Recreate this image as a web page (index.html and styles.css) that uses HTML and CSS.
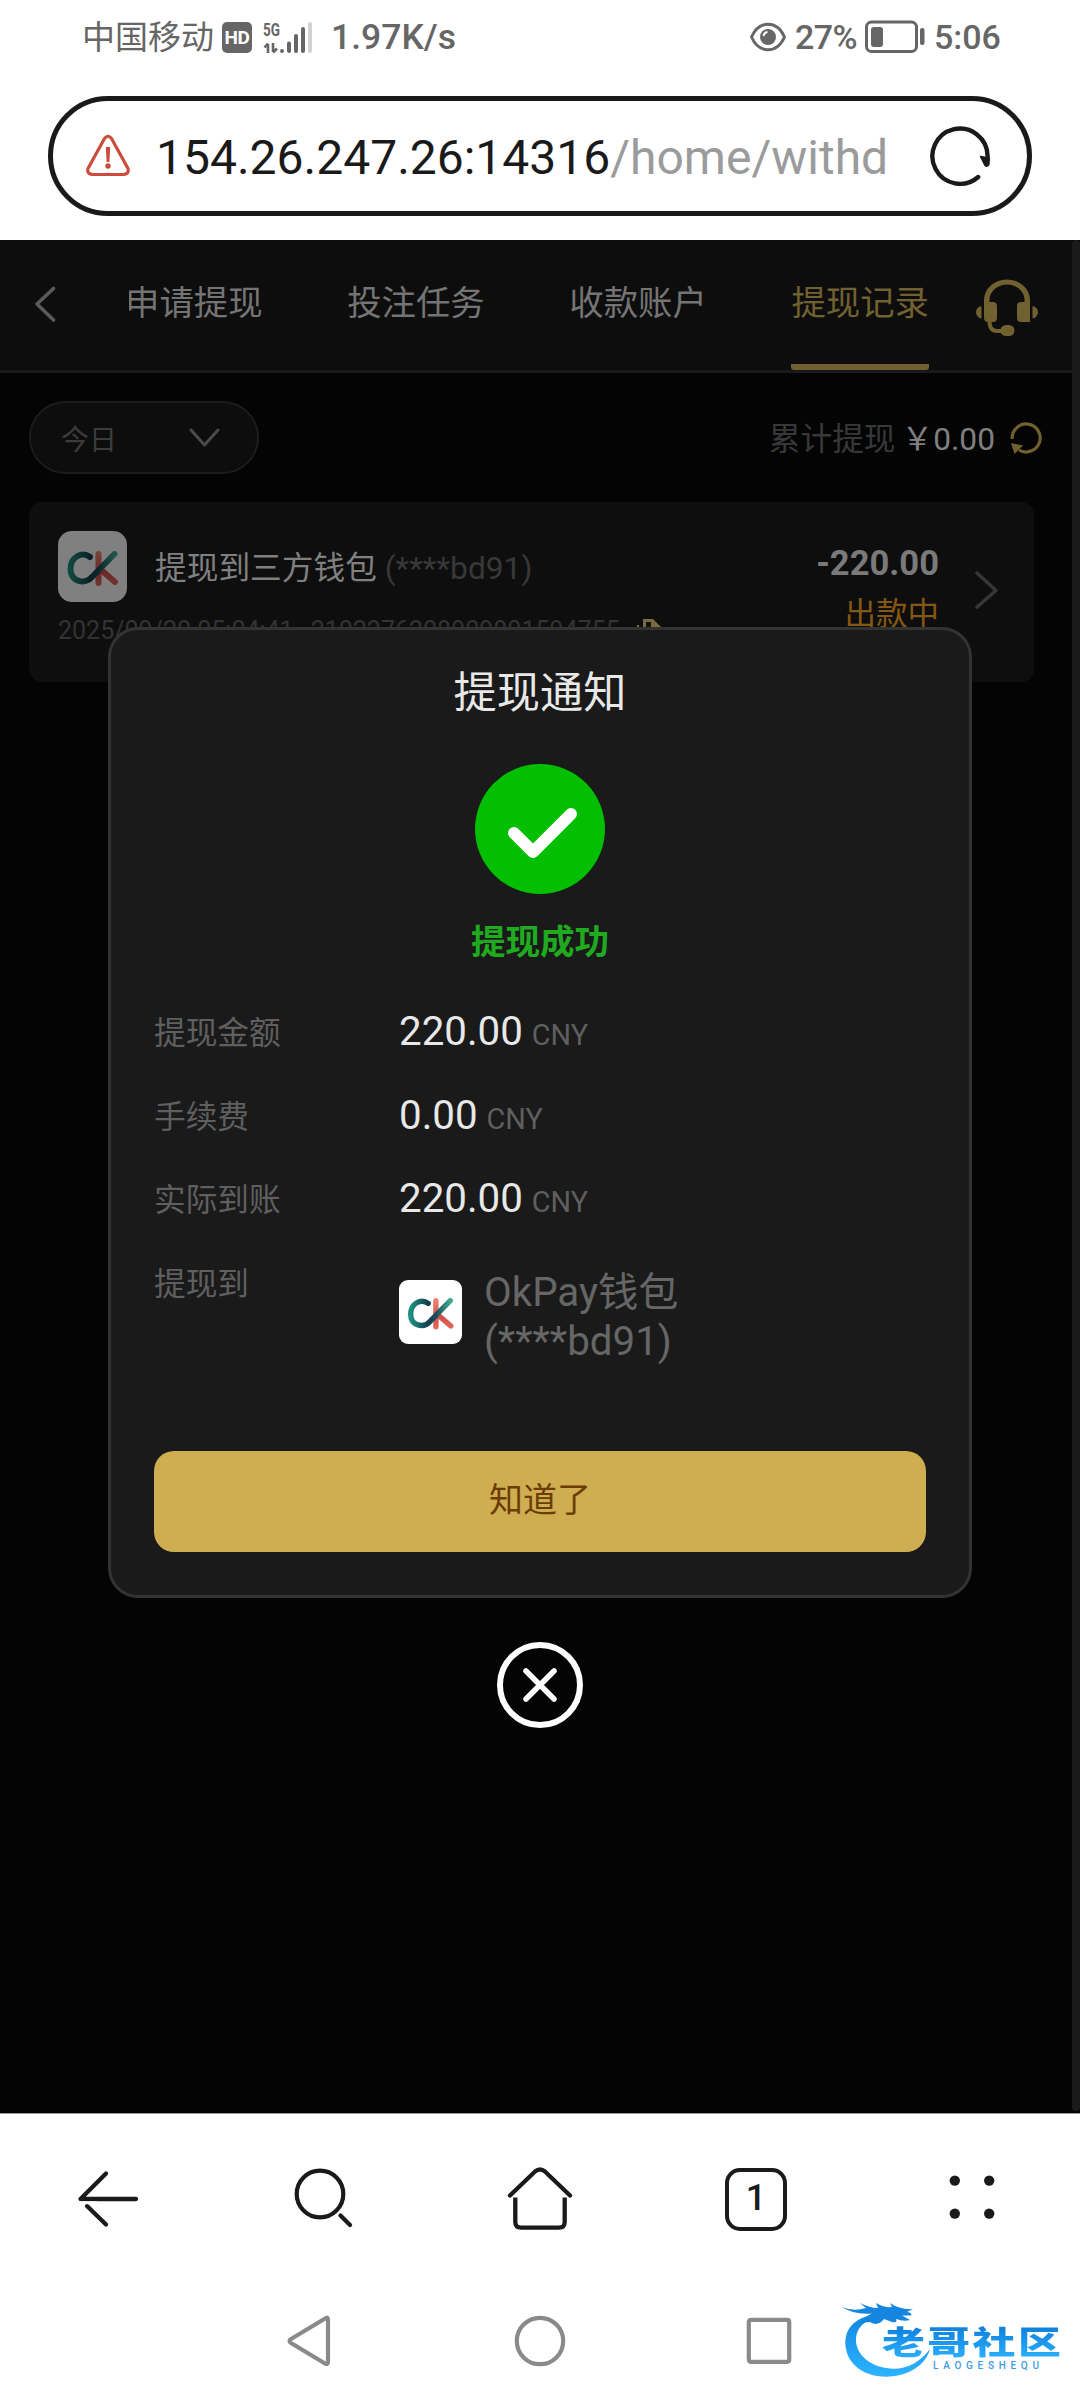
FILE: index.html
```html
<!DOCTYPE html>
<html lang="zh-CN">
<head>
<meta charset="utf-8">
<title>提现记录</title>
<link rel="stylesheet" href="styles.css">
</head>
<body>
<svg width="0" height="0" class="defs">
  <defs>
    <linearGradient id="ckTeal" gradientUnits="userSpaceOnUse" x1="12" y1="28" x2="57" y2="28"><stop offset="0" stop-color="#1d9280"/><stop offset=".45" stop-color="#153f50"/><stop offset=".65" stop-color="#17505d"/><stop offset="1" stop-color="#45ad92"/></linearGradient>
    <linearGradient id="ckRed" gradientUnits="userSpaceOnUse" x1="0" y1="22" x2="0" y2="54"><stop offset="0" stop-color="#ee8371"/><stop offset=".6" stop-color="#d3504c"/><stop offset="1" stop-color="#e46a5c"/></linearGradient>
    <linearGradient id="sea" gradientUnits="userSpaceOnUse" x1="0" y1="8" x2="0" y2="80"><stop offset="0" stop-color="#0f7fdc"/><stop offset="1" stop-color="#2bb2ff"/></linearGradient>
    <symbol id="ck" viewBox="0 0 69 71">
      <g fill="none" stroke-linecap="round" stroke-linejoin="round" stroke-width="6">
        <path d="M40.500 23V52M42 38l15 13" stroke="url(#ckRed)"/>
        <path d="M32 26C24 20 12.500 26 12.500 38C12.500 51 27 54 34 46L56.500 23" stroke="url(#ckTeal)"/>
      </g>
    </symbol>
  </defs>
</svg>

<div class="screen">
  <header class="status">
    <div class="status-left">
      <span class="carrier">中国移动</span>
      <span class="hd">HD</span>
      <svg class="signal" width="52" height="34" viewBox="0 0 52 34">
        <text x="0" y="15.500" class="g5" textLength="17" lengthAdjust="spacingAndGlyphs">5G</text>
        <path d="M5 33V24M1.500 27.500L5 23.500M10 23v9M10 32.500l4-4" fill="none" stroke="#666" stroke-width="2.600"/>
        <g stroke="#666" stroke-width="4" stroke-linecap="round"><path d="M19 31v0M26 23.500v7.500M33 16v15M40 9v22"/><path d="M47 4v27" stroke="#d2d2d2"/></g>
      </svg>
      <span class="speed">1.97K/s</span>
    </div>
    <div class="status-right">
      <svg width="38" height="30" viewBox="0 0 38 30"><path d="M2.500 15C10-2 28-2 35.500 15C28 32 10 32 2.500 15Z" fill="none" stroke="#666" stroke-width="3"/><circle cx="19" cy="15" r="8" fill="#666"/><path d="M14.500 14q.5-3.500 4-4" stroke="#fff" stroke-width="1.800" fill="none"/></svg>
      <span class="pct">27%</span>
      <svg class="batt" width="62" height="34" viewBox="0 0 62 34"><rect x="1.500" y="2" width="50" height="29.500" rx="5" fill="none" stroke="#666" stroke-width="3"/><rect x="6" y="7" width="12" height="20" rx="3" fill="#666"/><rect x="55" y="8" width="4.500" height="17" rx="2" fill="#666"/></svg>
      <span class="clock">5:06</span>
    </div>
  </header>

  <div class="addr">
    <svg class="warn" width="46" height="44" viewBox="0 0 46 44"><path d="M19.500 4.500Q23 0 26.500 4.500L43 34.500Q44.500 39.500 39 40.500H7Q1.500 39.500 3 34.500Z" fill="none" stroke="#cc4b3c" stroke-width="3.200" stroke-linejoin="round"/><path d="M20.800 13h4.400l-.8 15h-2.800z" fill="#cc4b3c"/><circle cx="23" cy="32" r="2.700" fill="#cc4b3c"/></svg>
    <div class="url">154.26.247.26:14316<span>/home/withd</span></div>
    <svg class="reload" width="64" height="64" viewBox="0 0 64 64"><path d="M50.200 53A27.600 27.600 0 1 1 59.600 32V36" fill="none" stroke="#1a1a1a" stroke-width="4.400" stroke-linecap="round"/><path d="M52.500 32.500L61 34V40Q59.500 43.500 57 41.500Z" fill="#1a1a1a" stroke="#1a1a1a" stroke-width="1.500" stroke-linejoin="round"/></svg>
  </div>

  <main class="page">
    <div class="content">
      <nav class="tabs">
        <svg class="back" width="24" height="37" viewBox="0 0 24 37"><path d="M19.500 2.500L3 18L19.500 34" fill="none" stroke="#5a5a5a" stroke-width="3.600" stroke-linecap="round" stroke-linejoin="round"/></svg>
        <div class="tablist">
          <span class="tab first">申请提现</span>
          <span class="tab">投注任务</span>
          <span class="tab">收款账户</span>
          <span class="tab active">提现记录</span>
        </div>
        <svg class="headset" width="64" height="58" viewBox="0 0 64 58"><g fill="#716030"><path d="M9 24V22a23 20.500 0 0 1 46 0V44H46a4 4 0 0 1-4-4V28a4 4 0 0 1 4-4H49.500V22a17.500 15.500 0 0 0-35 0V24H18a4 4 0 0 1 4 4V40a4 4 0 0 1-4 4H13a4 4 0 0 1-4-4Z"/><path d="M6.500 28V40.500A6.300 6.300 0 0 1 6.500 28ZM57.500 28V40.500A6.300 6.300 0 0 0 57.500 28Z"/><rect x="25.500" y="47" width="14" height="11" rx="5.500"/></g><path d="M14.500 43Q14.500 53 22 53H28" fill="none" stroke="#716030" stroke-width="4"/></svg>
      </nav>

      <div class="filter">
        <div class="select"><span>今日</span><svg width="32" height="22" viewBox="0 0 32 22"><path d="M3 3L16.500 18L30 3" fill="none" stroke="#4a4a4a" stroke-width="3" stroke-linecap="round" stroke-linejoin="round"/></svg></div>
        <div class="sum"><span class="sum-label">累计提现</span><span class="sum-val">￥0.00</span><svg width="34" height="34" viewBox="0 0 34 34"><path d="M3.200 18A14 14 0 1 1 10 29" fill="none" stroke="#716030" stroke-width="3.200"/><path d="M2 22l12 2.500-8.500 8.500z" fill="#716030"/></svg></div>
      </div>

      <section class="record">
        <div class="rec-main">
          <div class="rec-top"><span class="logo dim"><svg width="69" height="71"><use href="#ck"/></svg></span><span class="rec-title">提现到三方钱包 <em>(****bd91)</em></span></div>
          <div class="rec-meta"><span>2025/09/20 05:04:41</span><span>2102276208909801594755</span><svg width="24" height="26" viewBox="0 0 24 26"><path d="M1 6V24h14" fill="none" stroke="#7a6b3c" stroke-width="2"/><path d="M6 0h10l8 8v14H6z" fill="#7a6b3c"/><path d="M9 3h5v9H9z" fill="#101010"/></svg></div>
        </div>
        <div class="rec-side"><b>-220.00</b><span>出款中</span></div>
        <svg class="go" width="26" height="40" viewBox="0 0 26 40"><path d="M3 3L22 20.500L3 37" fill="none" stroke="#363636" stroke-width="3.600" stroke-linecap="round" stroke-linejoin="round"/></svg>
      </section>
    </div>
    <div class="scrollbar"></div>

    <div class="layer">
      <div class="dialog">
        <h1>提现通知</h1>
        <svg class="ok" width="130" height="130" viewBox="0 0 130 130"><circle cx="65" cy="65" r="65" fill="#04be02"/><path d="M39 69L58 88L96 50" fill="none" stroke="#fff" stroke-width="12" stroke-linecap="round" stroke-linejoin="round"/></svg>
        <p class="done">提现成功</p>
        <dl>
          <dt>提现金额</dt><dd>220.00 <small>CNY</small></dd>
          <dt>手续费</dt><dd>0.00 <small>CNY</small></dd>
          <dt>实际到账</dt><dd>220.00 <small>CNY</small></dd>
          <dt>提现到</dt>
          <dd class="to"><span class="logo small"><svg width="63" height="64"><use href="#ck"/></svg></span><span class="wallet">OkPay钱包<br>(****bd91)</span></dd>
        </dl>
        <button class="confirm">知道了</button>
      </div>
      <svg class="close" width="86" height="86" viewBox="0 0 86 86"><circle cx="43" cy="43" r="40" fill="none" stroke="#fff" stroke-width="6"/><path d="M29 29L57 57M57 29L29 57" stroke="#fff" stroke-width="5.500" stroke-linecap="round"/></svg>
    </div>
  </main>

  <nav class="toolbar">
    <svg viewBox="0 0 80 80"><path d="M38 19.500L12.500 45H68M38 70.500L19 52" fill="none" stroke="#1a1a1a" stroke-width="4.300" stroke-linecap="round" stroke-linejoin="round"/><path d="M9 47.400h20v2.800H9z" fill="#fff"/></svg>
    <svg viewBox="0 0 80 80"><circle cx="36" cy="40" r="23.300" fill="none" stroke="#1a1a1a" stroke-width="4.200"/><path d="M56.500 61.500l9.500 9.500" stroke="#1a1a1a" stroke-width="4.300" stroke-linecap="round"/></svg>
    <svg viewBox="0 0 80 80"><path d="M10 41.500L35 17.500Q40 13.500 45 17.500L70 41.500" fill="none" stroke="#1a1a1a" stroke-width="4.300" stroke-linecap="round"/><path d="M15.300 43.500V68Q15.300 73.700 21 73.700H59Q64.700 73.700 64.700 68V43.500" fill="none" stroke="#1a1a1a" stroke-width="4.300"/></svg>
    <span class="pages"><span>1</span></span>
    <svg viewBox="0 0 80 80"><g fill="#1a1a1a"><circle cx="22.800" cy="26.600" r="5.200"/><circle cx="57.200" cy="26.600" r="5.200"/><circle cx="22.800" cy="59.600" r="5.200"/><circle cx="57.200" cy="59.600" r="5.200"/></g></svg>
  </nav>

  <footer class="sysnav">
    <svg width="44" height="52" viewBox="0 0 44 52"><path d="M39 3Q41 2 41 5V47Q41 50 38 48.500L4 28Q1 26 4 24Z" fill="none" stroke="#8a8a8a" stroke-width="4.200" stroke-linejoin="round"/></svg>
    <svg width="52" height="52" viewBox="0 0 52 52"><circle cx="26" cy="26" r="23.200" fill="none" stroke="#8a8a8a" stroke-width="4.200"/></svg>
    <svg width="46" height="48" viewBox="0 0 46 48"><rect x="2.800" y="2.800" width="40.400" height="42" rx="2" fill="none" stroke="#8a8a8a" stroke-width="4.200"/></svg>
    <div class="mark">
      <svg class="dragon" width="94" height="90" viewBox="0 0 94 90">
        <path d="M32 20C11 24 3 38 6 54C10 76 36 86 60 80C76 76 87 66 90 54C78 70 62 76 46 73C28 70 15 58 16 43C17 33 24 26 36 22Z" fill="url(#sea)"/>
        <path d="M2 12Q14 17 26 13L20 8Q30 13 38 13L36 8Q44 13 52 12L50 8Q60 15 73 14L67 17Q73 18 71 20.500H62L70 25Q64 27 56 24Q58 28 52 27L44 24Q38 32 30 27L20 28Q26 21 32 18.500Q14 20 2 12Z" fill="#1586df"/>
      </svg>
      <span class="mark-cn">老哥社区</span>
      <span class="mark-en">LAOGESHEQU</span>
    </div>
  </footer>
</div>
</body>
</html>
```
FILE: styles.css
```css
* { box-sizing: border-box; }
body { margin: 0; background: #fff; font-family: Roboto, "Noto Sans CJK SC", sans-serif; }
svg { display: block; flex: none; }
.defs { position: absolute; }
.screen { width: 1080px; height: 2400px; display: flex; flex-direction: column; overflow: hidden; white-space: nowrap; }

.status { height: 96px; padding: 19px 81px 0 82px; display: flex; justify-content: space-between; color: #666; }
.status-left, .status-right { display: flex; height: 36px; align-items: center; }
.carrier { font-size: 33px; line-height: 36px; width: 132px; padding-top: 1px; }
.hd { width: 30px; height: 31px; margin-left: 8px; border-radius: 5px; background: #666; color: #fff; font-size: 19px; font-weight: 700; line-height: 31px; text-align: center; letter-spacing: -.5px; }
.signal { margin-left: 11px; }
.g5 { font-size: 18px; font-weight: 700; fill: #666; }
.speed { font-size: 35.500px; line-height: 36px; font-weight: 500; margin-left: 16px; }
.pct { font-size: 34px; font-weight: 500; margin-left: 8px; width: 62px; letter-spacing: -.6px; }
.batt { margin-left: 8px; }
.clock { font-size: 34px; font-weight: 500; margin-left: 7px; width: 65px; }

.addr { height: 120px; margin: 0 48px 24px; border: 5px solid #1a1a1a; border-radius: 60px; display: flex; align-items: center; padding-left: 32px; }
.url { margin-left: 25px; width: 747px; font-size: 48px; line-height: 60px; padding-top: 3px; color: #1a1a1a; }
.url span { color: #9b9b9b; }
.reload { margin-left: 25px; }

.page { position: relative; height: 1874px; background: #040404; display: flex; border-bottom: 1px solid #999; }
.content { width: 1072px; }
.scrollbar { width: 8px; height: 1871px; background: #1a1a1a; border-radius: 4px; }
.tabs { height: 133px; background: #0d0d0d; border-bottom: 3px solid #1a1a1a; display: flex; }
.back { margin: 46px 0 0 34px; }
.tablist { display: flex; justify-content: space-between; margin-left: 71px; width: 800px; overflow: hidden; }
.tab { font-size: 34.400px; line-height: 126px; height: 130px; color: #747474; }
.tab.first { margin-left: -4px; }
.tab.active { color: #716030; border-bottom: 6px solid #716030; border-radius: 3px; }
.headset { margin: 38px 0 0 46px; }

.filter { display: flex; justify-content: space-between; padding: 28px 29px 0; }
.select { width: 230px; height: 73px; border: 2px solid #1c1c1c; border-radius: 37px; background: #0d0d0d; color: #3c3c3c; font-size: 28px; padding: 0 37px 0 30px; display: flex; justify-content: space-between; align-items: center; }
.sum { display: flex; align-items: center; height: 73px; font-size: 31.700px; }
.sum-label { color: #383838; margin: -3px 6px 0 0; }
.sum-val { color: #808080; margin: -3px 14px 0 0; }

.record { margin: 28px 38px 0 29px; height: 180px; border-radius: 13px; background: #0e0e0e; padding: 29px 32px 0 29px; display: flex; }
.rec-main { width: 640px; }
.rec-top { display: flex; height: 71px; align-items: center; }
.logo { display: block; background: #fff; overflow: hidden; }
.logo.dim { width: 69px; height: 71px; border-radius: 14px; filter: brightness(.5); }
.logo.small { width: 63px; height: 64px; border-radius: 9px; }
.rec-title { margin: -3px 0 0 28px; font-size: 31.700px; color: #808080; }
.rec-title em { font-style: normal; color: #383838; }
.rec-meta { display: flex; margin-top: 14px; font-size: 25px; line-height: 30px; color: #333; gap: 17px; }
.rec-meta svg { margin-top: 3px; }
.rec-side { width: 241px; display: flex; flex-direction: column; align-items: flex-end; color: #7a7a7a; }
.rec-side b { font-size: 34.560px; line-height: 40px; margin-top: 12px; }
.rec-side span { font-size: 31.500px; line-height: 46px; margin-top: 9px; color: #855714; }
.go { margin: 39px 0 0 35px; }

.layer { position: absolute; inset: 387px 0 auto; display: flex; flex-direction: column; align-items: center; }
.dialog { width: 864px; height: 971px; border: 3px solid #333; border-radius: 30px; background: #1a1a1a; display: flex; flex-direction: column; align-items: center; padding: 0 43px; }
h1 { margin: 32px 0 0; font-size: 43.200px; line-height: 64px; font-weight: 400; color: #e8e8e8; }
.ok { margin-top: 38px; }
.done { margin: 23px 0 0; font-size: 34.560px; line-height: 50px; font-weight: 700; color: #1faa1f; }
dl { margin: 40px 0 0; width: 772px; display: grid; grid-template-columns: 245px 1fr; grid-auto-rows: 83.500px; }
dt { font-size: 31.680px; line-height: 50px; color: #5f5f5f; padding-top: 2px; }
dd { margin: 0; font-size: 40.300px; line-height: 50px; color: #e8e8e8; }
dd small { font-size: 28.800px; color: #5f5f5f; margin-left: -1px; }
.to { display: flex; align-items: center; height: 109px; }
.wallet { margin-left: 22px; font-size: 40.300px; line-height: 49px; color: #666; padding-top: 9px; }
.confirm { width: 772px; height: 101px; margin-top: 110px; border: 0; border-radius: 20px; background: #cfae52; color: #6b3d04; font: inherit; font-size: 34px; line-height: 98px; padding: 0 0 3px; flex: none; }
.close { margin-top: 44px; }

.toolbar { height: 166px; padding: 0 68px; display: flex; justify-content: space-between; align-items: center; }
.toolbar svg { width: 80px; height: 80px; margin-bottom: 6px; }
.pages { width: 80px; height: 80px; display: flex; justify-content: center; align-items: center; }
.pages span { width: 62px; height: 63px; margin-top: 5px; border: 4.300px solid #1a1a1a; border-radius: 15px; font-size: 36px; font-weight: 500; line-height: 53px; text-align: center; color: #1a1a1a; }
.sysnav { height: 120px; display: flex; align-items: center; padding: 2px 0 0 287px; }
.sysnav > svg:nth-child(2) { margin-left: 183px; }
.sysnav > svg:nth-child(3) { margin-left: 180px; }
.mark { position: relative; margin: -2px 0 0 48px; width: 236px; height: 90px; padding: 31px 0 0 42px; }
.dragon { position: absolute; left: 0; top: 0; }
.mark-cn { position: relative; display: block; width: 134px; font-size: 32px; line-height: 34px; font-weight: 900; letter-spacing: 1.800px; transform: scaleX(1.34); transform-origin: 0 0; color: transparent; background: linear-gradient(#0f7fdc, #2bb2ff); -webkit-background-clip: text; background-clip: text; }
.mark-en { position: relative; display: block; margin-left: 51px; font-size: 10px; line-height: 12px; font-weight: 500; letter-spacing: 4.700px; color: #3a9be6; }
```
